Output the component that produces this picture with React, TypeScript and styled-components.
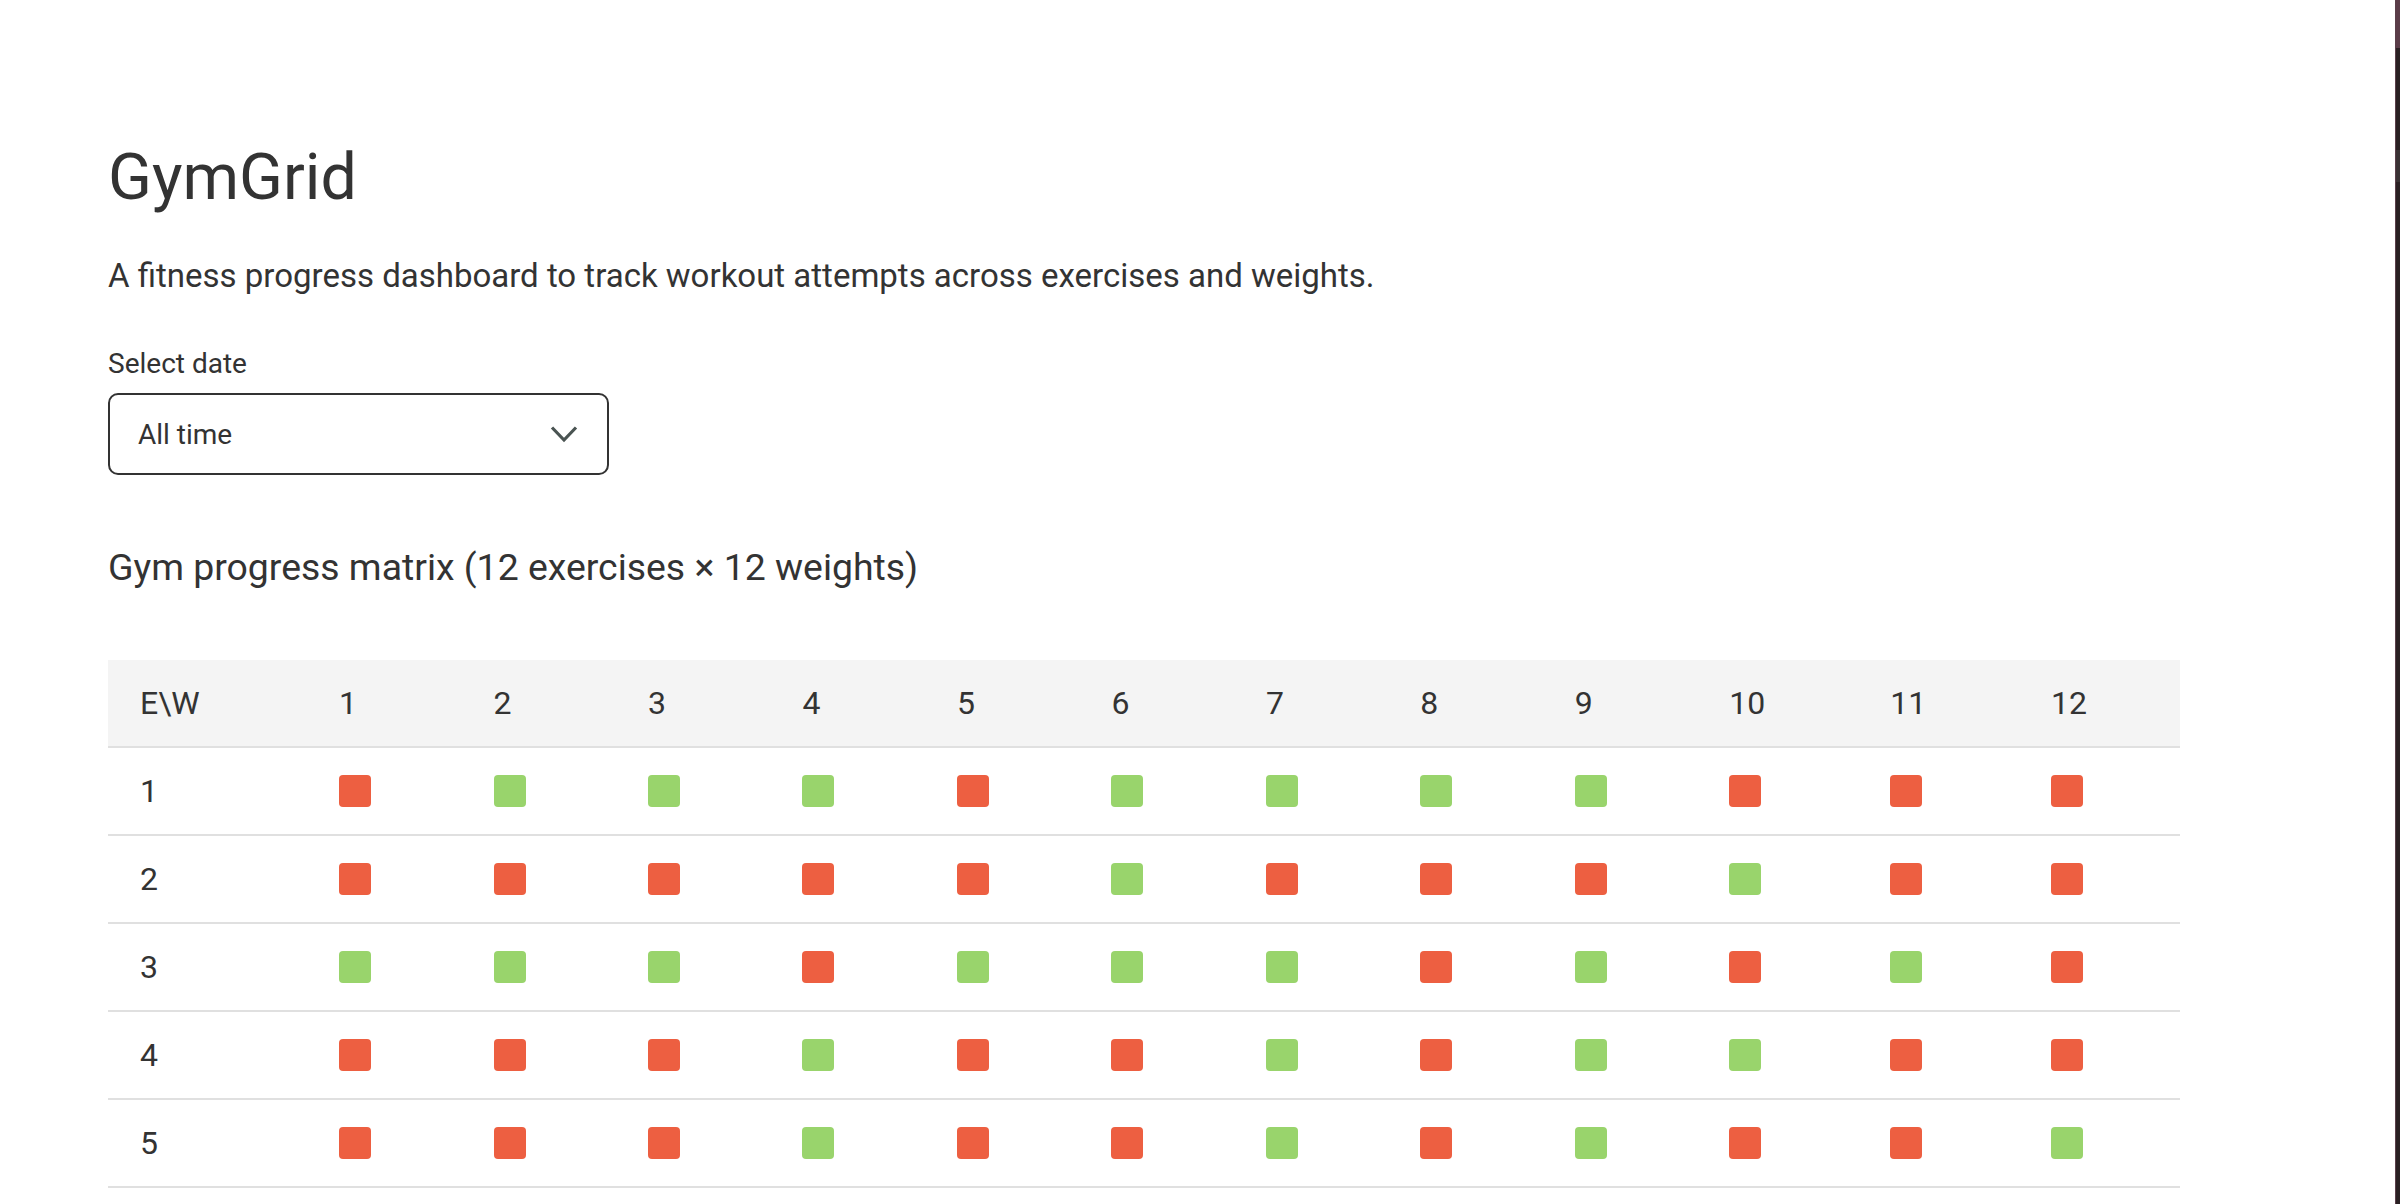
import React from 'react';
import styled, { createGlobalStyle } from 'styled-components';

type Attempt = 'pass' | 'fail';

const Colors = {
  text: '#333333',
  pass: '#99d46c',
  fail: '#ed5f41',
  headerBg: '#f4f4f4',
  line: '#e0e0e0',
  chevron: '#4a5452',
};

const GlobalStyle = createGlobalStyle`
  html, body {
    margin: 0;
    padding: 0;
    background: #ffffff;
  }
  body {
    font-family: Roboto, "Liberation Sans", Arial, sans-serif;
    color: ${Colors.text};
    overflow: hidden;
  }
`;

const Page = styled.div`
  display: flex;
  align-items: flex-start;
  width: 100%;
`;

const Main = styled.main`
  flex: 1;
  padding: 140px 0 0 108px;
`;

const WindowEdge = styled.div`
  flex: 0 0 5px;
  height: 100vh;
  background: linear-gradient(
    to bottom,
    #5a3c48 0,
    #5a3c48 48px,
    #2a2023 48px,
    #2a2023 150px,
    #3a3234 150px,
    #3a3234 182px,
    #2a2023 182px
  );
  border-left: 1px solid #5b3f4a;
  box-sizing: border-box;
`;

const Content = styled.div`
  width: 2072px;
`;

const Title = styled.h1`
  margin: 0;
  font-size: 64.5px;
  font-weight: 400;
  line-height: 75px;
`;

const Subtitle = styled.p`
  margin: 42px 0 0;
  font-size: 33px;
  line-height: 38px;
`;

const Field = styled.div`
  margin-top: 52px;
  display: flex;
  flex-direction: column;
  gap: 12px;
`;

const Label = styled.label`
  font-size: 28px;
  line-height: 34px;
`;

const SelectBox = styled.button`
  width: 501px;
  height: 82px;
  box-sizing: border-box;
  display: flex;
  align-items: center;
  justify-content: space-between;
  padding: 0 29px 0 28px;
  border: 2px solid #333333;
  border-radius: 10px;
  background: #ffffff;
  font-family: inherit;
  font-size: 28px;
  color: ${Colors.text};
  cursor: pointer;
`;

const SectionTitle = styled.h3`
  margin: 71px 0 0;
  font-size: 37.4px;
  font-weight: 400;
  line-height: 43px;
`;

const Matrix = styled.table`
  margin-top: 71px;
  width: 100%;
  border-collapse: collapse;
  font-size: 32px;
`;

const HeadCell = styled.th`
  background: ${Colors.headerBg};
  text-align: left;
  font-weight: 400;
  padding: 24px 32px;
  line-height: 38px;
  border-bottom: 2px solid ${Colors.line};
`;

const BodyRow = styled.tr`
  border-bottom: 2px solid ${Colors.line};
`;

const Cell = styled.td`
  padding: 24px 32px;
  line-height: 38px;
  vertical-align: middle;
`;

const Square = styled.span<{ $status: Attempt }>`
  display: block;
  width: 32px;
  height: 32px;
  border-radius: 4px;
  background: ${({ $status }) => ($status === 'pass' ? Colors.pass : Colors.fail)};
`;

const Chevron = () => (
  <svg width="28" height="18" viewBox="0 0 28 18" fill="none">
    <path d="M2 2.5 L14 15 L26 2.5" stroke={Colors.chevron} strokeWidth="3.2" strokeLinejoin="miter" />
  </svg>
);

const rows = [
  'FPPPFPPPPFFF',
  'FFFFFPFFFPFF',
  'PPPFPPPFPFPF',
  'FFFPFFPFPPFF',
  'FFFPFFPFPFFP',
  'PFPPFFPPFPFF',
  'FPFFPPFPFFPP',
  'PPFPFFFPPFPF',
  'FFPPPFPFFPFP',
  'PFFFPPFFPPPF',
  'FPPFFPPFPFFP',
  'PFPFPFFPPFPF',
];

const weights = Array.from({ length: 12 }, (_, i) => i + 1);

const App = () => {
  return (
    <>
      <GlobalStyle />
      <Page>
        <Main>
          <Content>
            <Title>GymGrid</Title>
            <Subtitle>A fitness progress dashboard to track workout attempts across exercises and weights.</Subtitle>
            <Field>
              <Label>Select date</Label>
              <SelectBox type="button">
                <span>All time</span>
                <Chevron />
              </SelectBox>
            </Field>
            <SectionTitle>Gym progress matrix (12 exercises × 12 weights)</SectionTitle>
            <Matrix>
              <thead>
                <tr>
                  <HeadCell>E\W</HeadCell>
                  {weights.map((w) => (
                    <HeadCell key={w}>{w}</HeadCell>
                  ))}
                </tr>
              </thead>
              <tbody>
                {rows.map((row, i) => (
                  <BodyRow key={i}>
                    <Cell>{i + 1}</Cell>
                    {row.split('').map((c, j) => (
                      <Cell key={j}>
                        <Square $status={c === 'P' ? 'pass' : 'fail'} />
                      </Cell>
                    ))}
                  </BodyRow>
                ))}
              </tbody>
            </Matrix>
          </Content>
        </Main>
        <WindowEdge />
      </Page>
    </>
  );
};

export default App;
